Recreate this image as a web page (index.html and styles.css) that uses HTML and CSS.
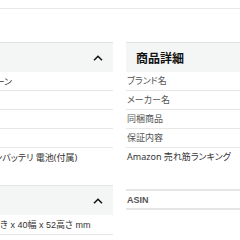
FILE: index.html
```html
<!DOCTYPE html>
<html lang="ja">
<head>
<meta charset="utf-8">
<link rel="stylesheet" href="styles.css">
</head>
<body>
<div class="topbar"></div>
<div class="cols">
  <section class="panel left">
    <div class="phead">
      <span class="ptitle">技術仕様</span>
      <svg class="chev" width="10" height="6" viewBox="0 0 10 6"><polyline points="1,5.2 5,1.2 9,5.2" fill="none" stroke="#111" stroke-width="1.5"/></svg>
    </div>
    <div class="tbl t1">
      <div class="row"><span class="k">カラー</span><span class="v">ブラック/グリーン</span></div>
      <div class="row"><span class="k">接続</span><span class="v">USB</span></div>
      <div class="row"><span class="k">数量</span><span class="v">1 個</span></div>
      <div class="row"><span class="k">重量</span><span class="v">約 230 グラム</span></div>
      <div class="row last"><span class="k">電源</span><span class="v">リチウムイオンバッテリ 電池(付属)</span></div>
    </div>
    <div class="phead second">
      <span class="ptitle">寸法</span>
      <svg class="chev" width="10" height="6" viewBox="0 0 10 6"><polyline points="1,5.2 5,1.2 9,5.2" fill="none" stroke="#111" stroke-width="1.5"/></svg>
    </div>
    <div class="tbl t2">
      <div class="row"><span class="k">寸法</span><span class="v">10奥行き x 40幅 x 52高さ mm</span></div>
    </div>
  </section>
  <section class="panel right">
    <div class="phead"><h2 class="htitle">商品詳細</h2></div>
    <div class="list">
      <div class="item">ブランド名</div>
      <div class="item">メーカー名</div>
      <div class="item">同梱商品</div>
      <div class="item">保証内容</div>
      <div class="item rank">Amazon 売れ筋ランキング</div>
      <div class="item asin">ASIN</div>
    </div>
  </section>
</div>
</body>
</html>
```

FILE: styles.css
```css
html, body {
  margin: 0;
  padding: 0;
  background: #fff;
  overflow: hidden;
}
body {
  width: 240px;
  height: 240px;
  font-family: "Noto Sans", "Noto Sans CJK JP", sans-serif;
  font-size: 9px;
  color: #333;
  font-feature-settings: "palt";
}
.topbar {
  height: 8px;
  border-bottom: 1px solid #e8e8e8;
}
.cols {
  display: flex;
  gap: 13px;
  margin-top: 33px;
  align-items: flex-start;
}
.panel.left {
  flex: 0 0 233px;
  margin-left: -120px;
}
.panel.right {
  flex: 0 0 200px;
}
.phead {
  height: 29px;
  border-top: 1px solid #e3e3e3;
  background: #f4f5f5;
  display: flex;
  align-items: center;
  justify-content: space-between;
  padding: 0 10px;
}
.ptitle {
  font-size: 12px;
  font-weight: 700;
  color: #111;
}
.chev {
  display: block;
}
.htitle {
  margin: 0;
  font-size: 12px;
  font-weight: 700;
  color: #111;
  font-family: "Noto Sans CJK JP", sans-serif;
}
.phead.second {
  margin-top: 19px;
}
.tbl .row {
  display: grid;
  height: 18px;
  align-items: center;
  border-bottom: 1px solid #e7e7e7;
}
.tbl .row.last {
  border-bottom: none;
}
.t1 .row {
  grid-template-columns: 66px 1fr;
}
.t2 .row {
  grid-template-columns: 92px 1fr;
  height: 19px;
}
.t2 .v {
  font-family: "Liberation Sans", "Noto Sans CJK JP", sans-serif;
}
.k {
  color: #555;
}
.v {
  white-space: nowrap;
  color: #333;
}
.list .item {
  height: 18px;
  line-height: 18px;
  border-bottom: 1px solid #e7e7e7;
  color: #555;
  padding-left: 1px;
  white-space: nowrap;
}
.list .item.rank {
  height: 41px;
  color: #333;
  border-bottom: 2px solid #e6e6e6;
}
.list .item.asin {
  height: 17px;
  font-weight: 700;
  color: #555;
  font-family: "Liberation Sans", sans-serif;
  border-bottom: 2px solid #e6e6e6;
}
```
